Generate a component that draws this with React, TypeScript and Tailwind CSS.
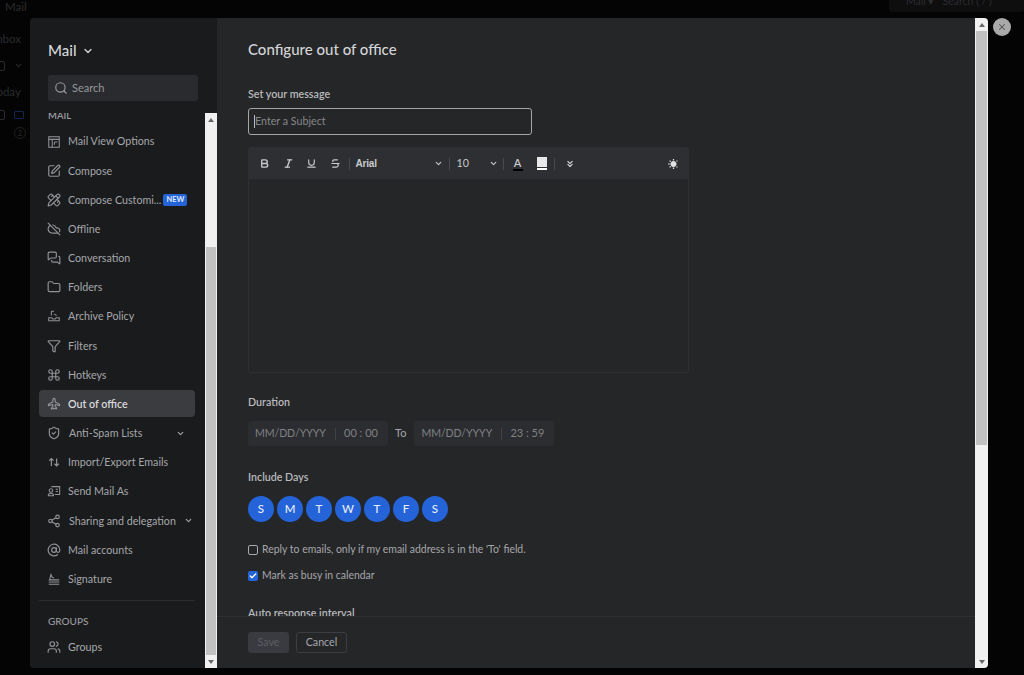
import {
  AtSign,
  Bold,
  Check,
  ChevronDown,
  ChevronsDown,
  CloudOff,
  Command,
  Filter,
  Folder,
  Italic,
  MessagesSquare,
  PencilRuler,
  Search,
  Share2,
  ShieldCheck,
  SquarePen,
  Strikethrough,
  Underline,
  Users,
  X,
} from "lucide-react";

const LayoutIcon = ({ className }: { className?: string }) => (
  <svg viewBox="0 0 16 16" fill="none" stroke="currentColor" strokeWidth="1.2" className={className}>
    <rect x="2" y="2" width="12" height="12" />
    <path d="M2 5h12M6 5v9M8.5 8H12M8.5 8v3" />
  </svg>
);

const ArchiveIcon = ({ className }: { className?: string }) => (
  <svg viewBox="0 0 16 16" fill="none" stroke="currentColor" strokeWidth="1.2" className={className}>
    <path d="M2 10h3.5l1 1.5h3l1-1.5H14v3.5H2zM5 7.5V2.5M5 2.5h3M8 5.5l3 2" />
  </svg>
);

const SendAsIcon = ({ className }: { className?: string }) => (
  <svg viewBox="0 0 16 16" fill="none" stroke="currentColor" strokeWidth="1.2" className={className}>
    <path d="M5 3h9.5v9H9M10 6h2.5M10 8.5h2.5" />
    <circle cx="4.5" cy="7.5" r="2" />
    <path d="M1.5 13.5c0-2 1.2-3 3-3s3 1 3 3z" />
  </svg>
);

const SignatureIcon = ({ className }: { className?: string }) => (
  <svg viewBox="0 0 16 16" fill="none" stroke="currentColor" strokeWidth="1.2" className={className}>
    <path d="M2 9h12M2 11.5h12M2 14h12M3 9l1.5-6 1.5 3 2 1" />
  </svg>
);

const PlaneUpIcon = ({ className }: { className?: string }) => (
  <svg viewBox="0 0 16 16" fill="none" stroke="currentColor" strokeWidth="1.3" strokeLinejoin="round" className={className}>
    <path d="M8 1.5c1 0 1.4 1.2 1.4 3v1.3l5 2.6v1.4l-5-1.2v2.4l1.5 1.2v1.3L8 13l-2.9.8v-1.3l1.5-1.2V8.6l-5 1.2V8.4l5-2.6V4.5c0-1.8.4-3 1.4-3z" />
  </svg>
);

const SwapIcon = ({ className }: { className?: string }) => (
  <svg viewBox="0 0 16 16" fill="none" stroke="currentColor" strokeWidth="1.4" className={className}>
    <path d="M5 12.5V4M2.5 6.5 5 4l2.5 2.5M11 4v8.5M8.5 10l2.5 2.5 2.5-2.5" />
  </svg>
);

// toolbar light/dark switch: sun with a hollow right side
const SunIcon = ({ className }: { className?: string }) => (
  <svg viewBox="0 0 12 12" fill="none" stroke="currentColor" className={className}>
    <circle cx="6.5" cy="6" r="2.6" fill="currentColor" strokeWidth="1" />
    <path d="M6.5 1v1.4M6.5 9.6V11M1 6h1.8M2.6 2.6l1.1 1.1M2.6 9.4l1.1-1.1M10.4 2.6l-.8.8M10.4 9.4l-.8-.8" strokeWidth="1.2" />
  </svg>
);

const iconCls = "w-[14px] h-[14px] shrink-0 -ml-px text-[#909296]";

const menuItems = [
  { label: "Mail View Options", icon: <LayoutIcon className={iconCls} /> },
  { label: "Compose", icon: <SquarePen className={iconCls} /> },
  { label: "Compose Customi...", icon: <PencilRuler className={iconCls} />, badge: true },
  { label: "Offline", icon: <CloudOff className={iconCls} /> },
  { label: "Conversation", icon: <MessagesSquare className={iconCls} /> },
  { label: "Folders", icon: <Folder className={iconCls} /> },
  { label: "Archive Policy", icon: <ArchiveIcon className={iconCls} /> },
  { label: "Filters", icon: <Filter className={iconCls} /> },
  { label: "Hotkeys", icon: <Command className={iconCls} /> },
  { label: "Out of office", icon: <PlaneUpIcon className={iconCls} />, active: true },
  { label: "Anti-Spam Lists", icon: <ShieldCheck className={iconCls} />, caret: "ml-[34px]", shift: true },
  { label: "Import/Export Emails", icon: <SwapIcon className={iconCls} /> },
  { label: "Send Mail As", icon: <SendAsIcon className={iconCls} /> },
  { label: "Sharing and delegation", icon: <Share2 className={iconCls} />, caret: "ml-[8px]", shift: true },
  { label: "Mail accounts", icon: <AtSign className={iconCls} /> },
  { label: "Signature", icon: <SignatureIcon className={iconCls} /> },
];

const days = ["S", "M", "T", "W", "T", "F", "S"];

function ScrollArrow({ down }: { down?: boolean }) {
  return (
    <div className="h-[13px] flex items-center justify-center">
      <div
        className={
          down
            ? "w-0 h-0 border-x-[3px] border-x-transparent border-t-[4px] border-t-[#666]"
            : "w-0 h-0 border-x-[3px] border-x-transparent border-b-[4px] border-b-[#666]"
        }
      />
    </div>
  );
}

function DateRange({ time }: { time: string }) {
  return (
    <div className="w-[140px] h-[25px] bg-[#2c2d30] rounded-[3px] flex items-center pl-[7px] text-[10.6px] text-[#7f8185]">
      <span className="w-[80px] tracking-[-0.1px]">MM/DD/YYYY</span>
      <span className="w-px h-[12px] bg-[#404246]" />
      <span className="ml-[8px] text-[11px]">{time}</span>
    </div>
  );
}

function Sep() {
  return <span className="w-px h-[12px] bg-[#47494d] shrink-0" />;
}

export default function App() {
  return (
    <div className="relative w-[1024px] h-[675px] overflow-hidden bg-[#040404] font-['Lato','Liberation_Sans',sans-serif]">
      {/* dimmed app behind the dialog */}
      <div className="absolute left-0 top-0 w-[30px] h-[150px] overflow-hidden text-[11.5px] text-[#2a2b2e]">
        <div className="absolute left-[5px] -top-[2px]">Mail</div>
        <div className="absolute -left-[7px] top-[30px] whitespace-nowrap">Inbox</div>
        <div className="absolute -left-[9px] top-[83px] whitespace-nowrap">Today</div>
        <div className="absolute -left-[5px] top-[61px] w-[10px] h-[10px] rounded-[2px] border border-[#2a2b2e]" />
        <ChevronDown className="absolute left-[14px] top-[61px] w-[9px] h-[9px]" strokeWidth={3} />
        <div className="absolute -left-[5px] top-[110px] w-[10px] h-[10px] rounded-[2px] border border-[#2a2b2e]" />
        <div className="absolute left-[14px] top-[111px] w-[10px] h-[8px] rounded-[1px] border border-[#10264f]" />
        <div className="absolute left-[14px] top-[127px] w-[12px] h-[12px] rounded-full border border-[#1e1f21] flex items-center justify-center text-[7px]">
          2
        </div>
      </div>
      <div className="absolute left-[889px] -top-[12px] w-[135px] h-[24px] bg-[#0e0e0f] rounded-[3px] text-[10.5px] text-[#2c2d30] pl-[17px] pt-[6px] whitespace-nowrap">
        Mail ▾ &nbsp; Search ( / )
      </div>

      {/* dialog */}
      <div className="absolute left-[30px] top-[18px] w-[958px] h-[650px] flex rounded-[4px] overflow-hidden bg-[#252628]">
        <aside className="w-[187px] shrink-0 bg-[#1a1b1d] flex flex-col">
          <div className="h-[95px] shrink-0 pl-[18px]">
            <div className="flex items-center gap-[5px] pt-[23px] text-[15px] text-[#d6d7d9] font-medium leading-[19px]">
              Mail
              <ChevronDown className="w-[12px] h-[12px]" strokeWidth={2.5} />
            </div>
            <div className="mt-[15px] w-[150px] h-[26px] bg-[#2a2b2e] rounded-[3px] flex items-center pl-[6px] gap-[4px] text-[11px] text-[#96989c]">
              <Search className="w-[14px] h-[14px]" />
              Search
            </div>
          </div>
          <div className="flex flex-1 min-h-0">
            <div className="w-[175px] overflow-hidden">
              <div className="-mt-[3px] pl-[18px] text-[9.5px] font-semibold leading-[12px] text-[#9a9ca0]">MAIL</div>
              <div className="pl-[9px] pr-[10px] pt-[6px]">
                {menuItems.map((item) => (
                  <div
                    key={item.label}
                    className={
                      item.active
                        ? "h-[27px] mb-[2.17px] rounded-[4px] bg-[#3b3c40] flex items-center pl-[9px] text-[10.7px] font-semibold text-[#d8d9dc]"
                        : "h-[27px] mb-[2.17px] flex items-center pl-[9px] text-[10.7px] text-[#a5a7ab]"
                    }
                  >
                    {item.icon}
                    <span className={item.shift ? "ml-[8px] whitespace-nowrap" : "ml-[7px] whitespace-nowrap"}>{item.label}</span>
                    {item.badge && (
                      <span className="ml-[2px] h-[12px] px-[3px] rounded-[2px] bg-[#2563d9] text-[#dfe8fb] text-[7.5px] font-bold leading-[12px]">
                        NEW
                      </span>
                    )}
                    {item.caret && <ChevronDown className={`w-[9px] h-[9px] ${item.caret}`} strokeWidth={3} />}
                  </div>
                ))}
                <div className="h-px bg-[#2b2c2f] mt-[8px]" />
                <div className="pl-[9px] mt-[14px] text-[10px] font-medium leading-[12px] text-[#9a9ca0]">GROUPS</div>
                <div className="h-[27px] mt-[6px] flex items-center pl-[9px] text-[10.7px] text-[#a5a7ab]">
                  <Users className={iconCls} />
                  <span className="ml-[7px]">Groups</span>
                </div>
              </div>
            </div>
            <div className="w-[12px] shrink-0 bg-[#f1f1f1] flex flex-col">
              <ScrollArrow />
              <div className="h-[121px]" />
              <div className="flex-1 mx-[1px] bg-[#c1c1c1]" />
              <ScrollArrow down />
            </div>
          </div>
        </aside>

        <main className="flex-1 flex flex-col min-w-0">
          <div className="flex-1 min-h-0 overflow-hidden pl-[31px]">
            <h1 className="pt-[22px] text-[15px] leading-[19px] font-medium text-[#d3d4d7]">Configure out of office</h1>
            <div className="mt-[28px] text-[10.7px] leading-[14px] font-semibold text-[#b8babd]">Set your message</div>
            <div className="mt-[7px] w-[284px] h-[27px] rounded-[3px] border border-[#a5a6a9] flex items-center pl-[5px] text-[10.7px] text-[#85878b]">
              <span className="w-px h-[13px] bg-[#bbb]" />
              Enter a Subject
            </div>
            <div className="mt-[12px] w-[441px] h-[226px] rounded-[3px] border border-[#2f3034]">
              <div className="h-[31px] bg-[#2e2f32] flex items-center text-[#c9cacd] pl-[10px]">
                <Bold className="w-[11px] h-[11px]" strokeWidth={3} />
                <Italic className="w-[11px] h-[11px] ml-[12.5px]" strokeWidth={3} />
                <Underline className="w-[11px] h-[11px] ml-[12.5px]" strokeWidth={2.5} />
                <Strikethrough className="w-[11px] h-[11px] ml-[12.5px]" strokeWidth={2.5} />
                <span className="ml-[8px] flex"><Sep /></span>
                <span className="ml-[6px] w-[78px] text-[10px] font-semibold tracking-[-0.2px] font-['Liberation_Sans',sans-serif]">Arial</span>
                <ChevronDown className="w-[9px] h-[9px]" strokeWidth={3} />
                <span className="ml-[6px] flex"><Sep /></span>
                <span className="ml-[7px] w-[32px] text-[10.7px]">10</span>
                <ChevronDown className="w-[9px] h-[9px]" strokeWidth={3} />
                <span className="ml-[5px] flex"><Sep /></span>
                <div className="ml-[9px] w-[10px] flex flex-col items-center">
                  <span className="text-[11px] leading-[11px] font-semibold">A</span>
                  <span className="w-[10px] h-[2px] mt-[1px] bg-black" />
                </div>
                <div className="ml-[14px] w-[10px] flex flex-col">
                  <span className="h-[10px] bg-[#e8e8e8]" />
                  <span className="h-[2px] mt-[1px] bg-white" />
                </div>
                <span className="ml-[7px] flex"><Sep /></span>
                <ChevronsDown className="w-[10px] h-[10px] ml-[10px]" strokeWidth={3} />
                <SunIcon className="ml-[92px] w-[12px] h-[12px] text-[#e2e2e2]" />
              </div>
            </div>
            <div className="mt-[22px] text-[10.7px] leading-[14px] font-semibold text-[#b8babd]">Duration</div>
            <div className="mt-[12px] flex items-center">
              <DateRange time="00 : 00" />
              <span className="ml-[7px] mr-[8px] text-[11px] text-[#a5a7ab]">To</span>
              <DateRange time="23 : 59" />
            </div>
            <div className="mt-[24px] text-[10.7px] leading-[14px] font-semibold text-[#b8babd]">Include Days</div>
            <div className="mt-[12px] flex gap-[3px]">
              {days.map((d, i) => (
                <div
                  key={i}
                  className="w-[26px] h-[26px] rounded-full bg-[#2563d9] flex items-center justify-center text-[11.5px] font-medium text-[#e8eefb]"
                >
                  {d}
                </div>
              ))}
            </div>
            <div className="mt-[21px] flex items-center gap-[4px] h-[14px] text-[10.45px] text-[#a5a7ab]">
              <span className="w-[10px] h-[10px] rounded-[2px] border border-[#a9abaf]" />
              Reply to emails, only if my email address is in the 'To' field.
            </div>
            <div className="mt-[12px] flex items-center gap-[4px] h-[14px] text-[10.45px] text-[#a5a7ab]">
              <span className="w-[10px] h-[10px] rounded-[2px] bg-[#2563d9] flex items-center justify-center text-white">
                <Check className="w-[8px] h-[8px]" strokeWidth={4} />
              </span>
              Mark as busy in calendar
            </div>
            <div className="mt-[23px] text-[10.7px] leading-[14px] font-semibold text-[#b8babd]">Auto response interval</div>
          </div>
          <div className="h-[52px] shrink-0 border-t border-[#2e2f33] pl-[31px] pt-[15px] flex gap-[7px]">
            <div className="w-[41px] h-[21px] rounded-[3px] bg-[#3a3b40] flex items-center justify-center text-[10.7px] text-[#5c5e62]">Save</div>
            <div className="w-[51px] h-[21px] rounded-[3px] border border-[#3c3d41] flex items-center justify-center text-[10.7px] text-[#a5a7ab]">Cancel</div>
          </div>
        </main>

        <div className="w-[13px] shrink-0 bg-[#f1f1f1] flex flex-col">
          <ScrollArrow />
          <div className="h-[414px] mx-[1px] bg-[#c1c1c1]" />
          <div className="flex-1" />
          <ScrollArrow down />
        </div>
      </div>

      <div className="absolute left-[993px] top-[18px] w-[18px] h-[18px] rounded-full bg-[#a9a9a9] flex items-center justify-center text-[#555]">
        <X className="w-[10px] h-[10px]" strokeWidth={2.5} />
      </div>
    </div>
  );
}
